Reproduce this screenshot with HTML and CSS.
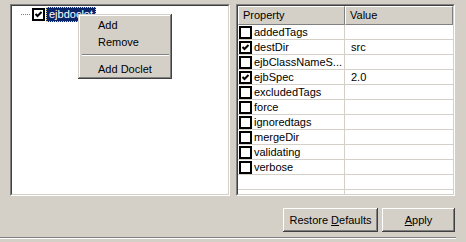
FILE: index.html
```html
<!DOCTYPE html>
<html>
<head>
<meta charset="utf-8">
<link rel="stylesheet" href="styles.css">
</head>
<body>
<div class="window">
  <div class="panes">
    <div class="pane tree-pane">
      <div class="pane-inner tree">
        <div class="tree-row">
          <span class="tree-line"></span>
          <span class="cb"><svg width="9" height="9" viewBox="0 0 9 9"><path d="M1.5 4 L3.5 6 L7.5 2" fill="none" stroke="#000" stroke-width="2"/></svg></span>
          <span class="tree-label">ejbdoclet</span>
        </div>
      </div>
    </div>
    <div class="pane table-pane">
      <div class="pane-inner table">
        <div class="thead">
          <div class="th col-prop">Property</div>
          <div class="th col-val">Value</div>
        </div>
        <div class="row"><div class="td col-prop"><span class="cb"></span>addedTags</div><div class="td col-val"></div></div>
        <div class="row"><div class="td col-prop"><span class="cb"><svg width="9" height="9" viewBox="0 0 9 9"><path d="M1.5 4 L3.5 6 L7.5 2" fill="none" stroke="#000" stroke-width="2"/></svg></span>destDir</div><div class="td col-val">src</div></div>
        <div class="row"><div class="td col-prop"><span class="cb"></span>ejbClassNameS...</div><div class="td col-val"></div></div>
        <div class="row"><div class="td col-prop"><span class="cb"><svg width="9" height="9" viewBox="0 0 9 9"><path d="M1.5 4 L3.5 6 L7.5 2" fill="none" stroke="#000" stroke-width="2"/></svg></span>ejbSpec</div><div class="td col-val">2.0</div></div>
        <div class="row"><div class="td col-prop"><span class="cb"></span>excludedTags</div><div class="td col-val"></div></div>
        <div class="row"><div class="td col-prop"><span class="cb"></span>force</div><div class="td col-val"></div></div>
        <div class="row"><div class="td col-prop"><span class="cb"></span>ignoredtags</div><div class="td col-val"></div></div>
        <div class="row"><div class="td col-prop"><span class="cb"></span>mergeDir</div><div class="td col-val"></div></div>
        <div class="row"><div class="td col-prop"><span class="cb"></span>validating</div><div class="td col-val"></div></div>
        <div class="row"><div class="td col-prop"><span class="cb"></span>verbose</div><div class="td col-val"></div></div>
        <div class="row"><div class="td col-prop"></div><div class="td col-val"></div></div>
        <div class="row"><div class="td col-prop"></div><div class="td col-val"></div></div>
      </div>
    </div>
  </div>
  <div class="actions">
    <button class="btn btn-restore">Restore <u>D</u>efaults</button>
    <button class="btn btn-apply"><u>A</u>pply</button>
  </div>
  <div class="rule"></div>
  <div class="menu">
    <div class="menu-item">Add</div>
    <div class="menu-item">Remove</div>
    <div class="menu-sep"></div>
    <div class="menu-item">Add Doclet</div>
  </div>
</div>
</body>
</html>
```

FILE: styles.css
```css
* { box-sizing: border-box; }
html, body {
  margin: 0;
  padding: 0;
  background: #d4d0c8;
}
body {
  font-family: "Liberation Sans", Arial, sans-serif;
  font-size: 11px;
  color: #000;
}
.window {
  position: relative;
  width: 466px;
  height: 242px;
  overflow: hidden;
}
.panes {
  display: flex;
  gap: 6px;
  padding: 4px 11px 0 10px;
}
.pane {
  height: 192px;
  border: 1px solid;
  border-color: #808080 #ffffff #ffffff #808080;
}
.tree-pane { width: 220px; }
.table-pane { width: 219px; }
.pane-inner {
  height: 100%;
  border: 1px solid;
  border-color: #404040 #d4d0c8 #d4d0c8 #404040;
  background: #fff;
  overflow: hidden;
}
.tree-row {
  display: flex;
  align-items: center;
  height: 15px;
  margin-top: 1px;
}
.tree-line {
  width: 9px;
  margin-left: 9px;
  border-top: 1px dotted #808080;
  margin-right: 2px;
}
.cb {
  width: 13px;
  height: 13px;
  border: 2px solid #000;
  background: #fff;
  display: inline-flex;
  align-items: center;
  justify-content: center;
  flex: none;
}
.cb svg { display: block; }
.tree-label {
  margin-left: 1px;
  background: #0a246a;
  color: #fff;
  height: 15px;
  line-height: 13px;
  padding: 0 2px;
  border: 1px dotted #e8d890;
}
.thead {
  display: flex;
  height: 19px;
}
.th {
  background: #d4d0c8;
  line-height: 17px;
  padding-left: 4px;
  border-top: 1px solid #fff;
  border-left: 1px solid #fff;
  border-right: 1px solid #808080;
  border-bottom: 1px solid #808080;
}
.col-prop { width: 107px; flex: none; }
.col-val { flex: 1; }
.row {
  display: flex;
  height: 15px;
  border-bottom: 1px solid #d4d0c8;
}
.td {
  display: flex;
  align-items: center;
  height: 14px;
  line-height: 14px;
  white-space: nowrap;
  overflow: hidden;
}
.td.col-prop {
  border-right: 1px solid #d4d0c8;
  padding-left: 1px;
}
.td.col-prop .cb { margin-right: 2px; }
.td.col-val { padding-left: 6px; }
.actions {
  display: flex;
  justify-content: flex-end;
  gap: 4px;
  padding-right: 11px;
  margin-top: 12px;
}
.btn {
  font: inherit;
  color: #000;
  height: 24px;
  background: #d4d0c8;
  border: none;
  padding: 0;
  box-shadow: inset -1px -1px #404040, inset 1px 1px #ffffff, inset -2px -2px #808080, inset 2px 2px #d4d0c8;
}
.btn-restore { width: 95px; }
.btn-apply { width: 73px; }
.rule {
  width: 456px;
  margin-top: 5px;
  border-top: 1px solid #808080;
  border-bottom: 1px solid #ffffff;
}
.menu {
  position: absolute;
  left: 78px;
  top: 14px;
  width: 94px;
  height: 65px;
  background: #d4d0c8;
  padding: 3px 2px 2px 2px;
  box-shadow: inset -1px -1px #404040, inset 1px 1px #d4d0c8, inset -2px -2px #808080, inset 2px 2px #ffffff;
}
.menu-item {
  height: 17px;
  line-height: 17px;
  padding-left: 18px;
}
.menu-sep {
  margin: 3px 1px 5px 2px;
  border-top: 1px solid #808080;
  border-bottom: 1px solid #ffffff;
}
```
